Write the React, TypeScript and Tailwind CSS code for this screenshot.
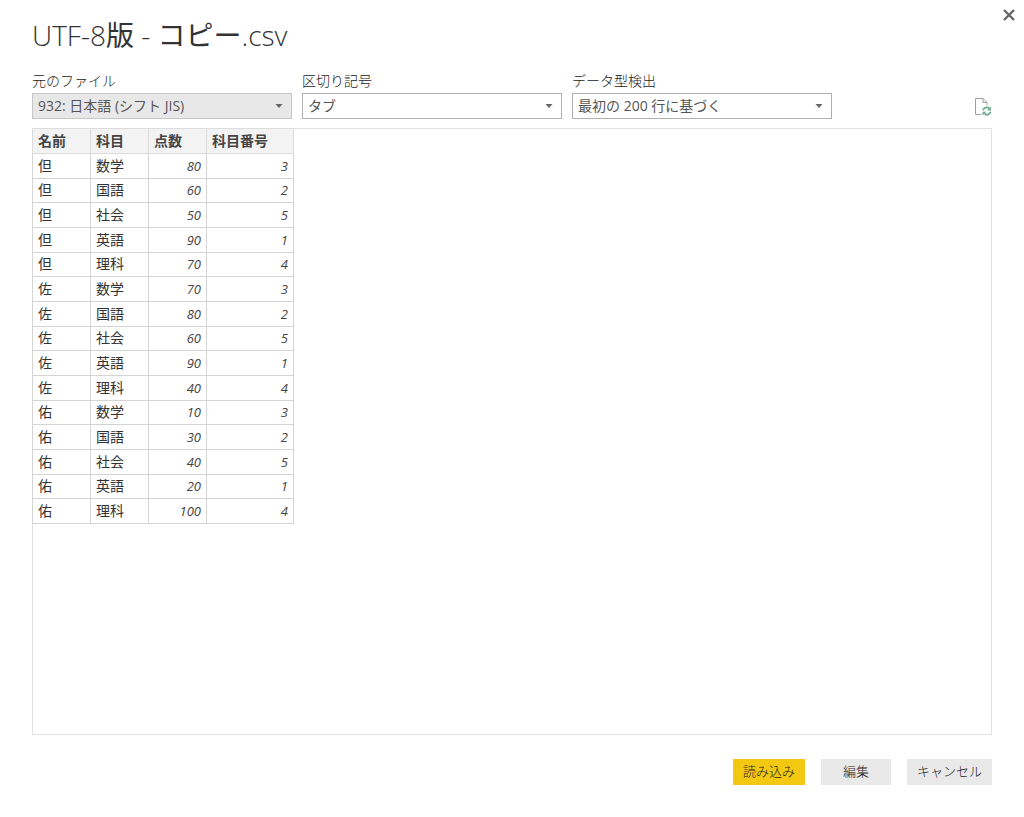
import React, { useState } from 'react'

interface ScoreRow {
  name: string
  subject: string
  score: number
  subjectNo: number
}

interface SelectFieldProps {
  id: string
  label: string
  options: string[]
  muted?: boolean
}

const subjects = [
  { subject: '数学', subjectNo: 3 },
  { subject: '国語', subjectNo: 2 },
  { subject: '社会', subjectNo: 5 },
  { subject: '英語', subjectNo: 1 },
  { subject: '理科', subjectNo: 4 }
]

const scores = [
  { name: '但', values: [80, 60, 50, 90, 70] },
  { name: '佐', values: [70, 80, 60, 90, 40] },
  { name: '佑', values: [10, 30, 40, 20, 100] }
]

const rows: ScoreRow[] = scores.flatMap(({ name, values }) =>
  values.map((score, i) => ({ name, score, ...subjects[i] }))
)

function SelectField({ id, label, options, muted }: SelectFieldProps) {
  const [value, setValue] = useState(options[0])

  return (
    <div className="w-[260px]">
      <label htmlFor={id} className="block h-5 text-sm font-light text-[#222]">
        {label}
      </label>
      <div className="relative mt-[2px]">
        <select
          id={id}
          value={value}
          onChange={(e) => setValue(e.target.value)}
          className={`block h-[26px] w-full appearance-none border pr-6 pl-[5px] text-sm leading-5 font-normal text-[#555] ${
            muted ? 'border-[#c6c6c6] bg-[#e8e8e8]' : 'border-[#b0b0b0] bg-white'
          }`}
        >
          {options.map((option) => (
            <option key={option}>{option}</option>
          ))}
        </select>
        <svg
          viewBox="0 0 8 4"
          className="pointer-events-none absolute top-[11px] right-[9px] h-1 w-2 fill-[#666]"
          aria-hidden="true"
        >
          <path d="M0.5 0h7L4 4z" />
        </svg>
      </div>
    </div>
  )
}

function RefreshFileIcon() {
  return (
    <svg viewBox="0 0 18 20" className="h-5 w-[18px]" fill="none" aria-hidden="true">
      <path d="M7.5 17.5h-6v-16h7.5l4 4v3" stroke="#a0a0a0" />
      <path d="M9 1.5v4h4" stroke="#a0a0a0" />
      <path d="M9 13.4a3.7 3.7 0 0 1 6.2-1.9M16.6 14.8a3.7 3.7 0 0 1-6.2 1.9" stroke="#6dae93" strokeWidth="1.8" />
      <path d="M17 9.6v3.8h-3.8zM8.6 18.6v-3.8h3.8z" fill="#6dae93" />
    </svg>
  )
}

export default function App() {
  return (
    <div className="relative flex min-h-screen flex-col bg-white px-8 pt-[17px] pb-8 font-['Open_Sans','Noto_Sans_CJK_JP',sans-serif] text-[#333]">
      <button type="button" aria-label="閉じる" className="absolute top-2 right-2 p-px">
        <svg viewBox="0 0 12 12" className="size-3" fill="none" stroke="#666" strokeWidth="2.4" aria-hidden="true">
          <path d="M1 1l10 10M11 1L1 11" />
        </svg>
      </button>

      <h1 className="text-[28px] leading-9 font-light">
        UTF-8<span className="font-normal">版</span> - <span className="font-normal">コピー</span>.csv
      </h1>

      {/* Import options */}
      <div className="mt-[18px] flex items-end justify-between">
        <div className="flex gap-[10px]">
          <SelectField id="origin" label="元のファイル" options={['932: 日本語 (シフト JIS)', '65001: Unicode (UTF-8)']} muted />
          <SelectField id="delimiter" label="区切り記号" options={['タブ', 'コンマ', 'セミコロン']} />
          <SelectField id="detection" label="データ型検出" options={['最初の 200 行に基づく', 'データセット全体に基づく']} />
        </div>
        <button type="button" aria-label="最新の情報に更新" className="mb-[2px]">
          <RefreshFileIcon />
        </button>
      </div>

      {/* Preview */}
      <div className="mt-[9px] flex-1 border border-[#e2e2e2]">
        <table className="-mt-px -ml-px h-[396px] w-[262px] table-fixed border-collapse text-sm leading-5 text-[#333]">
          <colgroup>
            <col className="w-[58px]" />
            <col className="w-[58px]" />
            <col className="w-[58px]" />
            <col />
          </colgroup>
          <thead>
            <tr className="h-[25px] bg-[#f3f3f3] text-left">
              {['名前', '科目', '点数', '科目番号'].map((heading) => (
                <th key={heading} scope="col" className="border border-[#dcdcdc] px-[5px] font-bold text-[#444]">
                  {heading}
                </th>
              ))}
            </tr>
          </thead>
          <tbody>
            {rows.map((row) => (
              <tr key={`${row.name}-${row.subject}`}>
                <td className="border border-[#d4d4d4] px-[5px]">{row.name}</td>
                <td className="border border-[#d4d4d4] px-[5px]">{row.subject}</td>
                <td className="border border-[#d4d4d4] px-[5px] text-right text-[13px] text-[#444] italic">{row.score}</td>
                <td className="border border-[#d4d4d4] px-[5px] text-right text-[13px] text-[#444] italic">{row.subjectNo}</td>
              </tr>
            ))}
          </tbody>
        </table>
      </div>

      {/* Actions */}
      <div className="mt-6 flex justify-end gap-4 text-[13px] leading-5 font-light text-[#222]">
        <button type="button" className="h-[26px] min-w-[70px] bg-[#f2c811] px-[10px] pb-[2px]">読み込み</button>
        <button type="button" className="h-[26px] min-w-[70px] bg-[#e9e9e9] px-[10px] pb-[2px]">編集</button>
        <button type="button" className="h-[26px] min-w-[70px] bg-[#e9e9e9] px-[10px] pb-[2px]">キャンセル</button>
      </div>
    </div>
  )
}
